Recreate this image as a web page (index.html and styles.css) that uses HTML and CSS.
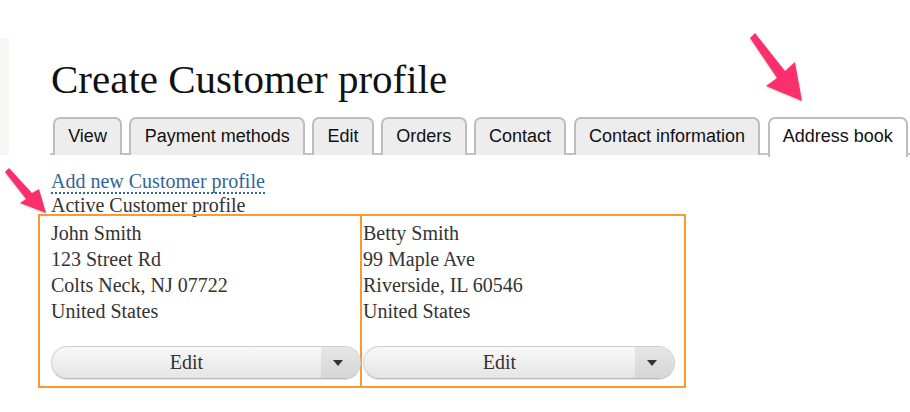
FILE: index.html
```html
<!DOCTYPE html>
<html lang="en">
<head>
<meta charset="utf-8">
<title>Create Customer profile</title>
<link rel="stylesheet" href="styles.css">
</head>
<body>
<div class="page">
  <h1 class="title">Create Customer profile</h1>
  <nav class="tabs">
    <a class="tab" href="#">View</a>
    <a class="tab" href="#">Payment methods</a>
    <a class="tab" href="#">Edit</a>
    <a class="tab" href="#">Orders</a>
    <a class="tab" href="#">Contact</a>
    <a class="tab" href="#">Contact information</a>
    <a class="tab tab-active" href="#">Address book</a>
  </nav>
  <div class="content">
    <p class="line"><a class="add-link" href="#">Add new Customer profile</a></p>
    <p class="line">Active Customer profile</p>
    <div class="cards">
      <div class="card card-first">
        <div class="address">
          <div>John Smith</div>
          <div>123 Street Rd</div>
          <div>Colts Neck, NJ 07722</div>
          <div>United States</div>
        </div>
        <div class="dropbutton">
          <span class="drop-main">Edit</span>
          <span class="drop-toggle"><span class="caret"></span></span>
        </div>
      </div>
      <div class="card card-second">
        <div class="address">
          <div>Betty Smith</div>
          <div>99 Maple Ave</div>
          <div>Riverside, IL 60546</div>
          <div>United States</div>
        </div>
        <div class="dropbutton">
          <span class="drop-main">Edit</span>
          <span class="drop-toggle"><span class="caret"></span></span>
        </div>
      </div>
    </div>
  </div>
</div>
<svg class="annotations" width="910" height="412" viewBox="0 0 910 412" aria-hidden="true">
  <polygon class="arrow" points="750,38 755,33 785,71 795,62 802,101 766,86 777,78"/>
  <polygon class="arrow" points="5,172 9,168 32,193 39,189 46,213 20,203 26,199"/>
</svg>
</body>
</html>
```
FILE: styles.css
```css
html, body {
  margin: 0;
  padding: 0;
}
body {
  width: 910px;
  height: 412px;
  overflow: hidden;
  position: relative;
  background: #fff linear-gradient(#f6f6f3, #f6f6f3) no-repeat 0 38px / 9px 117px;
  font-family: "Liberation Serif", "Times New Roman", serif;
  color: #333;
}
.page {
  padding: 55px 0 0 50px;
}
.title {
  margin: 0 0 0 1px;
  font-size: 41px;
  line-height: 48px;
  font-weight: normal;
  color: #111;
}
.tabs {
  margin-top: 14px;
  display: flex;
  gap: 7.4px;
  padding-left: 3px;
  border-bottom: 2px solid #c4c4c4;
  height: 36px;
}
.tab {
  display: block;
  box-sizing: border-box;
  height: 38px;
  padding: 6px 13.2px 0;
  font-family: "Liberation Sans", Arial, sans-serif;
  font-size: 18px;
  line-height: 22px;
  color: #111;
  text-decoration: none;
  background: #ededed;
  border: 2px solid #bdbdbd;
  border-bottom: none;
  border-radius: 7px 7px 0 0;
}
.tab-active {
  background: #fff;
  position: relative;
  z-index: 1;
  height: 40px;
}
.content {
  padding-top: 14px;
}
.line {
  margin: 0 0 0 1px;
  font-size: 20px;
  line-height: 24px;
}
.add-link {
  color: #31659c;
  text-decoration: none;
  border-bottom: 2px dotted #31659c;
}
.cards {
  display: flex;
  margin: -3px 0 0 -12px;
}
.card {
  box-sizing: border-box;
  width: 324px;
  height: 174px;
  border: 2px solid #fb9a31;
  padding-top: 4px;
}
.card-first {
  padding-left: 11px;
}
.card-second {
  border-left: none;
  padding-left: 1px;
  padding-right: 9px;
}
.address {
  font-size: 20px;
  line-height: 26px;
}
.dropbutton {
  margin-top: 22px;
  display: flex;
  height: 33px;
  box-sizing: border-box;
  border: 1px solid #cfcfcf;
  border-bottom-color: #b9b9b9;
  border-radius: 17px;
  overflow: hidden;
  background: linear-gradient(#f8f8f8, #e5e5e5);
  box-shadow: 0 1px 1px rgba(0, 0, 0, 0.12);
}
.card-first .dropbutton {
  width: 310px;
}
.drop-main {
  flex: 1;
  text-align: center;
  font-size: 20px;
  line-height: 31px;
  color: #333;
}
.drop-toggle {
  width: 39px;
  padding-right: 6px;
  box-sizing: border-box;
  display: flex;
  align-items: center;
  justify-content: center;
  background: linear-gradient(#e6e6e6, #d6d6d6);
}
.caret {
  width: 0;
  height: 0;
  border-left: 5.5px solid transparent;
  border-right: 5.5px solid transparent;
  border-top: 6px solid #333;
}
.annotations {
  position: absolute;
  left: 0;
  top: 0;
  pointer-events: none;
  filter: drop-shadow(0 1px 1px rgba(0, 0, 0, 0.2));
}
.arrow {
  fill: #fb2f6b;
}
```
